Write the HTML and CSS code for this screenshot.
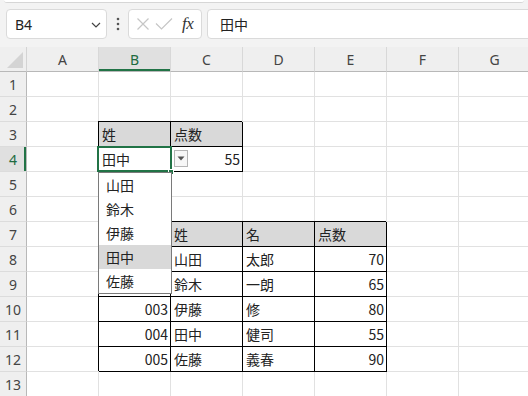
FILE: index.html
```html
<!DOCTYPE html>
<html lang="ja">
<head>
<meta charset="utf-8">
<title>Sheet</title>
<link rel="stylesheet" href="styles.css">
</head>
<body>
<div class="app">
  <div class="ribbon-edge"></div>
  <div class="fbar">
    <div class="namebox">
      <span class="nb-text">B4</span>
      <svg class="chev" width="10" height="6" viewBox="0 0 10 6"><path d="M1 1 L5 5 L9 1" fill="none" stroke="#444" stroke-width="1.2"/></svg>
    </div>
    <div class="dots">
      <svg width="4" height="14" viewBox="0 0 4 14"><circle cx="2" cy="2" r="1.3" fill="#555"/><circle cx="2" cy="7" r="1.3" fill="#555"/><circle cx="2" cy="12" r="1.3" fill="#555"/></svg>
    </div>
    <div class="fbtns">
      <svg class="ic" width="14" height="14" viewBox="0 0 14 14"><path d="M1.5 1.5 L12.5 12.5 M12.5 1.5 L1.5 12.5" stroke="#c6c6c6" stroke-width="1.2" fill="none"/></svg>
      <svg class="ic" width="18" height="14" viewBox="0 0 18 14"><path d="M1 6.5 L6.5 12 L17 1.5" stroke="#c6c6c6" stroke-width="1.2" fill="none"/></svg>
      <span class="fx">fx</span>
    </div>
    <div class="finput">田中</div>
  </div>

  <div class="sheet">
    <div class="corner"><svg width="27" height="25" viewBox="0 0 27 25"><path d="M7 21 L23 21 L23 5 Z" fill="#d4d4d4"/></svg></div>
    <div class="ch">A</div><div class="ch sel">B</div><div class="ch">C</div><div class="ch">D</div><div class="ch">E</div><div class="ch">F</div><div class="ch">G</div>

    <div class="rh">1</div><div class="c"></div><div class="c"></div><div class="c"></div><div class="c"></div><div class="c"></div><div class="c"></div><div class="c"></div>
    <div class="rh">2</div><div class="c"></div><div class="c"></div><div class="c"></div><div class="c"></div><div class="c"></div><div class="c"></div><div class="c"></div>
    <div class="rh">3</div><div class="c"></div><div class="c t h">姓</div><div class="c t h">点数</div><div class="c"></div><div class="c"></div><div class="c"></div><div class="c"></div>
    <div class="rh sel">4</div><div class="c"></div><div class="c t">田中</div><div class="c t n">55</div><div class="c"></div><div class="c"></div><div class="c"></div><div class="c"></div>
    <div class="rh">5</div><div class="c"></div><div class="c"></div><div class="c"></div><div class="c"></div><div class="c"></div><div class="c"></div><div class="c"></div>
    <div class="rh">6</div><div class="c"></div><div class="c"></div><div class="c"></div><div class="c"></div><div class="c"></div><div class="c"></div><div class="c"></div>
    <div class="rh">7</div><div class="c"></div><div class="c t h"></div><div class="c t h">姓</div><div class="c t h">名</div><div class="c t h">点数</div><div class="c"></div><div class="c"></div>
    <div class="rh">8</div><div class="c"></div><div class="c t n"></div><div class="c t">山田</div><div class="c t">太郎</div><div class="c t n">70</div><div class="c"></div><div class="c"></div>
    <div class="rh">9</div><div class="c"></div><div class="c t n"></div><div class="c t">鈴木</div><div class="c t">一朗</div><div class="c t n">65</div><div class="c"></div><div class="c"></div>
    <div class="rh">10</div><div class="c"></div><div class="c t n">003</div><div class="c t">伊藤</div><div class="c t">修</div><div class="c t n">80</div><div class="c"></div><div class="c"></div>
    <div class="rh">11</div><div class="c"></div><div class="c t n">004</div><div class="c t">田中</div><div class="c t">健司</div><div class="c t n">55</div><div class="c"></div><div class="c"></div>
    <div class="rh">12</div><div class="c"></div><div class="c t n">005</div><div class="c t">佐藤</div><div class="c t">義春</div><div class="c t n">90</div><div class="c"></div><div class="c"></div>
    <div class="rh">13</div><div class="c"></div><div class="c"></div><div class="c"></div><div class="c"></div><div class="c"></div><div class="c"></div><div class="c"></div>

    <div class="selbox"></div>
    <div class="handle"></div>
    <div class="ddbtn"><svg width="8" height="5" viewBox="0 0 8 5"><path d="M0.5 0.5 L7.5 0.5 L4 4.5 Z" fill="#555"/></svg></div>
    <ul class="dropdown">
      <li>山田</li>
      <li>鈴木</li>
      <li>伊藤</li>
      <li class="hl">田中</li>
      <li>佐藤</li>
    </ul>
  </div>
</div>
</body>
</html>
```

FILE: styles.css
```css
html, body {
  margin: 0;
  padding: 0;
  overflow: hidden;
  background: #ffffff;
}
* { box-sizing: border-box; }

.app {
  width: 528px;
  height: 396px;
  overflow: hidden;
  background: #f3f3f3;
  font-family: "Noto Sans", "Noto Sans CJK JP", sans-serif;
}

.ribbon-edge {
  height: 3px;
  background: #ffffff;
  border-bottom: 1px solid #d6d6d6;
  margin: 0 4px;
  border-radius: 0 0 4px 4px;
}

.fbar {
  height: 44px;
  display: flex;
  align-items: flex-start;
  padding: 6px 0 0 6px;
}

.namebox {
  width: 101px;
  height: 30px;
  background: #fff;
  border: 1px solid #dadada;
  border-radius: 4px;
  display: flex;
  align-items: center;
  justify-content: space-between;
  padding: 0 5px 0 8px;
}
.nb-text {
  font-family: "Noto Sans", sans-serif;
  font-size: 14px;
  color: #222;
}
.chev { margin-top: 1px; }

.dots {
  width: 21px;
  height: 30px;
  display: flex;
  align-items: center;
  justify-content: center;
  padding-left: 1px;
}

.fbtns {
  width: 74px;
  height: 30px;
  background: #fff;
  border: 1px solid #dadada;
  border-radius: 4px;
  display: flex;
  align-items: center;
  padding: 0 0 0 7px;
  gap: 5px;
}
.fx {
  font-family: "Liberation Serif", serif;
  font-style: italic;
  font-weight: normal;
  font-size: 17px;
  color: #333;
  margin-left: 4px;
  letter-spacing: -0.5px;
}

.finput {
  flex: 1;
  height: 30px;
  margin-left: 5px;
  margin-right: -6px;
  background: #fff;
  border: 1px solid #dadada;
  border-radius: 4px;
  display: flex;
  align-items: center;
  padding-left: 12px;
  font-family: "Noto Sans CJK JP", sans-serif;
  font-size: 14px;
  color: #222;
}

.sheet {
  position: relative;
  display: grid;
  grid-template-columns: 27px repeat(6, 72px) 72px;
  grid-auto-rows: 25px;
  background: #fff;
  font-family: "Noto Sans CJK JP", sans-serif;
  font-size: 14px;
  color: #222;
}

.corner {
  background: #efefef;
  border-right: 1px solid #d4d4d4;
  border-bottom: 1px solid #b8b8b8;
}
.corner svg { display: block; }

.ch {
  background: #efefef;
  border-right: 1px solid #d8d8d8;
  border-bottom: 1px solid #b8b8b8;
  display: flex;
  align-items: center;
  justify-content: center;
  font-family: "Noto Sans", sans-serif;
  font-size: 14px;
  color: #444;
}
.ch.sel {
  background: #e0e0e0;
  color: #1e6b41;
  box-shadow: inset 0 -2px 0 #217346;
}

.rh {
  background: #efefef;
  border-right: 1px solid #b8b8b8;
  border-bottom: 1px solid #dcdcdc;
  display: flex;
  align-items: center;
  justify-content: center;
  font-family: "Noto Sans", sans-serif;
  font-size: 14px;
  color: #444;
}
.rh.sel {
  background: #e0e0e0;
  color: #1e6b41;
  box-shadow: inset -2px 0 0 #217346;
}

.c {
  border-right: 1px solid #e1e1e1;
  border-bottom: 1px solid #e1e1e1;
  display: flex;
  align-items: center;
  padding: 0 2px 0 3px;
  white-space: nowrap;
  overflow: visible;
}
.c.t {
  border-right-color: #000;
  border-bottom-color: #000;
  box-shadow: -1px -1px 0 0 #000;
}
.c.h { background: #d9d9d9; }
.c.n { justify-content: flex-end; }

.selbox {
  position: absolute;
  left: 97px;
  top: 99px;
  width: 75px;
  height: 26px;
  border: 2px solid #217346;
}
.handle {
  position: absolute;
  left: 168px;
  top: 122px;
  width: 6px;
  height: 6px;
  background: #217346;
  border: 1px solid #fff;
}

.ddbtn {
  position: absolute;
  left: 174px;
  top: 103px;
  width: 14px;
  height: 17px;
  background: #f7f7f7;
  border: 1px solid #b5b5b5;
  display: flex;
  align-items: center;
  justify-content: center;
}
.ddbtn svg { display: block; }

.dropdown {
  position: absolute;
  left: 98px;
  top: 125px;
  width: 74px;
  margin: 0;
  padding: 0;
  list-style: none;
  background: #fff;
  border: 1px solid #7a7a7a;
}
.dropdown li {
  height: 24px;
  display: flex;
  align-items: center;
  padding-left: 7px;
  font-size: 14px;
  color: #222;
}
.dropdown li.hl { background: #d9d9d9; }
```
